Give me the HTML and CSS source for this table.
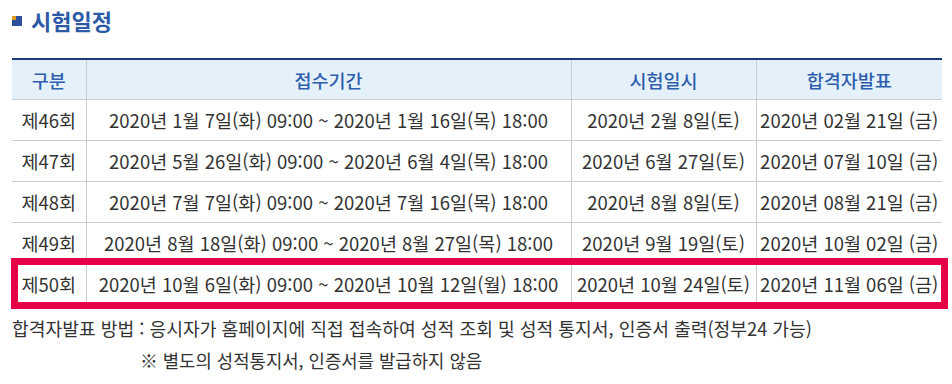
FILE: index.html
```html
<!DOCTYPE html>
<html lang="ko">
<head>
<meta charset="utf-8">
<title>시험일정</title>
<link rel="stylesheet" href="styles.css">
</head>
<body>
<div class="page">
  <h2 class="title"><span class="bullet"></span>시험일정</h2>
  <div class="table-wrap">
    <table class="schedule">
      <colgroup>
        <col class="c1"><col class="c2"><col class="c3"><col class="c4">
      </colgroup>
      <thead>
        <tr><th>구분</th><th>접수기간</th><th>시험일시</th><th>합격자발표</th></tr>
      </thead>
      <tbody>
        <tr><td>제46회</td><td>2020년 1월 7일(화) 09:00 ~ 2020년 1월 16일(목) 18:00</td><td>2020년 2월 8일(토)</td><td>2020년 02월 21일 (금)</td></tr>
        <tr><td>제47회</td><td>2020년 5월 26일(화) 09:00 ~ 2020년 6월 4일(목) 18:00</td><td>2020년 6월 27일(토)</td><td>2020년 07월 10일 (금)</td></tr>
        <tr><td>제48회</td><td>2020년 7월 7일(화) 09:00 ~ 2020년 7월 16일(목) 18:00</td><td>2020년 8월 8일(토)</td><td>2020년 08월 21일 (금)</td></tr>
        <tr><td>제49회</td><td>2020년 8월 18일(화) 09:00 ~ 2020년 8월 27일(목) 18:00</td><td>2020년 9월 19일(토)</td><td>2020년 10월 02일 (금)</td></tr>
        <tr><td>제50회</td><td>2020년 10월 6일(화) 09:00 ~ 2020년 10월 12일(월) 18:00</td><td>2020년 10월 24일(토)</td><td>2020년 11월 06일 (금)</td></tr>
      </tbody>
    </table>
    <div class="highlight"></div>
  </div>
  <p class="note">합격자발표 방법 : 응시자가 홈페이지에 직접 접속하여 성적 조회 및 성적 통지서, 인증서 출력(정부24 가능)</p>
  <p class="note sub">※ 별도의 성적통지서, 인증서를 발급하지 않음</p>
</div>
</body>
</html>
```

FILE: styles.css
```css
html, body {
  margin: 0;
  padding: 0;
  background: #ffffff;
}

body {
  font-family: "Noto Sans CJK KR", "Noto Sans", sans-serif;
  color: #333333;
}

.page {
  padding: 0 10px 0 12px;
}

.title {
  margin: 0;
  padding-top: 6px;
  display: flex;
  align-items: center;
  font-size: 22px;
  line-height: 28px;
  font-weight: 700;
  color: #2c5aa8;
}

.bullet {
  position: relative;
  width: 10px;
  height: 10px;
  background: #2b4f9a;
  margin-right: 9px;
  margin-top: 1px;
  flex: none;
}

.bullet::before {
  content: "";
  position: absolute;
  left: 0;
  top: 0;
  width: 4px;
  height: 4px;
  background: #dc9b1c;
}

.table-wrap {
  position: relative;
  margin-top: 24px;
  width: 930px;
}

.schedule {
  width: 930px;
  border-collapse: collapse;
  table-layout: fixed;
  border-top: 2px solid #1f3a78;
}

.c1 { width: 74px; }
.c2 { width: 485px; }
.c3 { width: 185px; }
.c4 { width: 186px; }

.schedule th,
.schedule td {
  height: 40px;
  padding: 0;
  text-align: center;
  font-size: 18.5px;
  line-height: 22px;
  border-bottom: 1px solid #cccccc;
  border-left: 1px solid #cccccc;
  white-space: nowrap;
}

.schedule th {
  background: #e4f1fa;
  color: #2f5eae;
  font-weight: 500;
  height: 39px;
}

.schedule th:first-child,
.schedule td:first-child {
  border-left: none;
}

.schedule td {
  color: #333333;
  font-weight: 400;
}

.highlight {
  position: absolute;
  left: -1px;
  top: 200px;
  width: 923px;
  height: 37px;
  border: 7px solid #e50047;
  pointer-events: none;
}

.note {
  margin: 0;
  font-size: 18.2px;
  line-height: 32px;
  color: #333333;
}

.note:first-of-type {
  margin-top: 7px;
}

.note.sub {
  padding-left: 128px;
  font-size: 17.8px;
}
```
